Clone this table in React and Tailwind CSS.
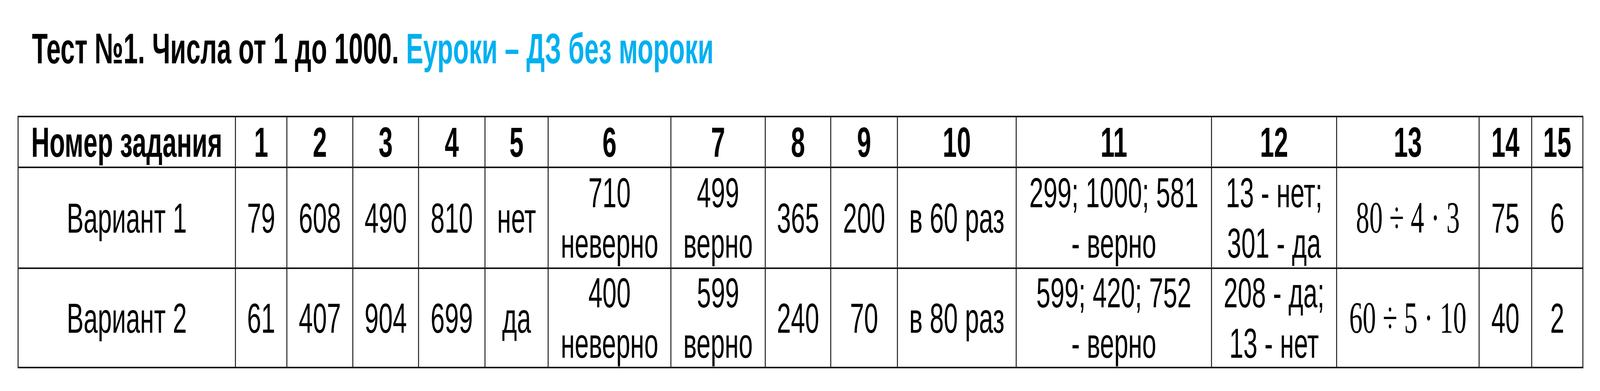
const header = ["Номер задания", "1", "2", "3", "4", "5", "6", "7", "8", "9", "10", "11", "12", "13", "14", "15"];

const rows = [
  [
    "Вариант 1",
    "79",
    "608",
    "490",
    "810",
    "нет",
    ["710", "неверно"],
    ["499", "верно"],
    "365",
    "200",
    "в 60 раз",
    ["299; 1000; 581", "- верно"],
    ["13 - нет;", "301 - да"],
    { math: "80 ÷ 4 · 3" },
    "75",
    "6",
  ],
  [
    "Вариант 2",
    "61",
    "407",
    "904",
    "699",
    "да",
    ["400", "неверно"],
    ["599", "верно"],
    "240",
    "70",
    "в 80 раз",
    ["599; 420; 752", "- верно"],
    ["208 - да;", "13 - нет"],
    { math: "60 ÷ 5 · 10" },
    "40",
    "2",
  ],
];

// the sheet is drawn for a 6816px wide page; fit it to the real window width
const PAGE_W = 6816;

const Cell = ({ value, bold }) => {
  let content = value;
  if (Array.isArray(value)) {
    content = (
      <>
        {value[0]}
        <br />
        {value[1]}
      </>
    );
  } else if (value && typeof value === "object") {
    content = (
      <span className="font-['Liberation_Serif',serif] text-[114px] whitespace-pre">{value.math}</span>
    );
  }

  return (
    <div
      className={
        "flex items-center justify-center text-center border-r-4 border-b-4 border-[#161616] leading-[129px] whitespace-nowrap " +
        (bold ? "font-bold" : "font-normal")
      }
    >
      <div>{content}</div>
    </div>
  );
};

const App = () => {
  const k = typeof window !== "undefined" ? Math.min(1, window.innerWidth / PAGE_W) : 1;

  return (
    <div className="w-screen h-[1000px] overflow-hidden bg-white">
      <div
        className="w-[6816px] h-[1000px] origin-top-left text-black font-['Liberation_Sans',Arial,sans-serif] text-[108px]"
        style={{ transform: `scaleX(${k})` }}
      >
        <div className="pt-[69px] pl-[136px] text-[110px] leading-none font-bold whitespace-nowrap">
          Тест №1. Числа от 1 до 1000. <span className="text-[#00b0f0]">Еуроки – ДЗ без мороки</span>
        </div>

        <div className="mt-[117px] ml-[75px] w-fit grid grid-cols-[926px_219px_281px_280px_283px_269px_523px_402px_279px_284px_506px_832px_533px_607px_224px_218px] grid-rows-[130px_258px_254px] border-l-4 border-t-4 border-[#161616]">
          {header.map((h, i) => (
            <Cell key={"h" + i} value={h} bold />
          ))}
          {rows.map((row, r) =>
            row.map((v, i) => <Cell key={r + "-" + i} value={v} />)
          )}
        </div>
      </div>
    </div>
  );
};

export default App;
